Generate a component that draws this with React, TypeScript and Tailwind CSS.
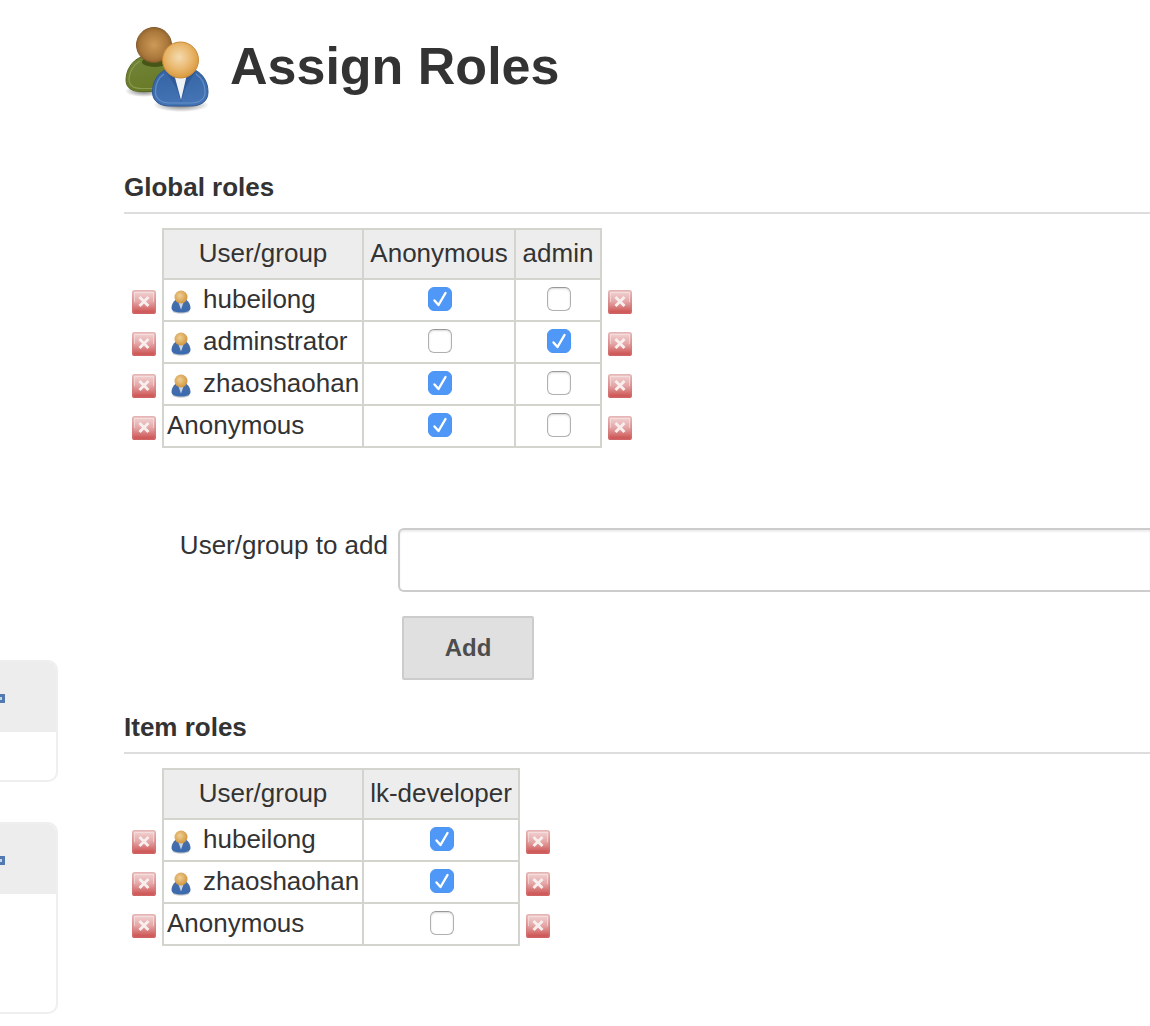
import React, { useState } from "react";

type Member = { name: string; icon: boolean; roles: boolean[] };

function AssignRolesIcon() {
  return (
    <svg className="size-[88px] shrink-0" viewBox="0 0 88 88" aria-hidden="true">
      <defs>
        <radialGradient id="brown" cx="0.5" cy="0.5" r="0.55">
          <stop offset="0" stopColor="#cd9a58" />
          <stop offset="0.7" stopColor="#ab783c" />
          <stop offset="1" stopColor="#8b5e2a" />
        </radialGradient>
        <radialGradient id="tan" cx="0.46" cy="0.42" r="0.6">
          <stop offset="0" stopColor="#f5dbb0" />
          <stop offset="0.6" stopColor="#e8b56a" />
          <stop offset="1" stopColor="#d8973a" />
        </radialGradient>
        <linearGradient id="green" x1="0" y1="0" x2="0.4" y2="1">
          <stop offset="0" stopColor="#71843a" />
          <stop offset="1" stopColor="#697b27" />
        </linearGradient>
        <linearGradient id="blue" x1="0" y1="0" x2="0.2" y2="1">
          <stop offset="0" stopColor="#3563a3" />
          <stop offset="1" stopColor="#4474b5" />
        </linearGradient>
        <radialGradient id="shade">
          <stop offset="0" stopColor="#000" stopOpacity="0.55" />
          <stop offset="1" stopColor="#000" stopOpacity="0" />
        </radialGradient>
      </defs>
      <ellipse cx="20" cy="67" rx="19" ry="6" fill="url(#shade)" />
      <ellipse cx="57" cy="81" rx="28" ry="7" fill="url(#shade)" />
      <path d="M17 33C7 37 2 47 2 56c0 8 6 11.500 15 11.500h28V33z" fill="url(#green)" stroke="#596a22" strokeWidth="1" />
      <path d="M16 37C9 41 5 49 5 55c0 7 5 9.500 13 9.500h14" fill="none" stroke="#8a9b50" strokeWidth="1.200" />
      <ellipse cx="31" cy="38" rx="13" ry="5" fill="#465616" />
      <circle cx="30" cy="21" r="17.500" fill="url(#brown)" stroke="#80582a" strokeWidth="1" />
      <path d="M41 46c-8 4-12.500 12-12.500 22 0 9 7 14 17 14h21c11 0 17.500-5 17.500-14 0-10-5-18-13-22z" fill="url(#blue)" stroke="#2f5892" strokeWidth="1" />
      <path d="M40 50c-6 4-8.500 11-8.500 18 0 7 6 11 14 11h21c9 0 14.500-4 14.500-11 0-8-3-14-9-18" fill="none" stroke="#648fc8" strokeWidth="1.200" />
      <path d="M42 48l11 17 4 13 4-13 10-17z" fill="#2f5997" />
      <path d="M50 50l7 26 6-26z" fill="#eef1f5" />
      <circle cx="56.500" cy="36" r="18" fill="url(#tan)" stroke="#c98b38" strokeWidth="1" />
    </svg>
  );
}

function PersonIcon() {
  return (
    <svg className="h-6 w-5 shrink-0" viewBox="0 0 20 24" aria-hidden="true">
      <defs>
        <radialGradient id="person-head" cx="0.42" cy="0.4" r="0.6">
          <stop offset="0" stopColor="#efcf95" />
          <stop offset="1" stopColor="#d2973f" />
        </radialGradient>
        <linearGradient id="person-body" x1="0" y1="0" x2="0" y2="1">
          <stop offset="0" stopColor="#4a6fa6" />
          <stop offset="1" stopColor="#3a6ab0" />
        </linearGradient>
      </defs>
      <ellipse cx="10" cy="21.500" rx="8.500" ry="2.200" fill="#000" opacity="0.2" />
      <path d="M5 9.500C1.500 12 .5 15.500.5 18c0 3 3.500 4.500 9.500 4.500s9.500-1.500 9.500-4.500c0-2.500-1-6-4.500-8.500z" fill="url(#person-body)" />
      <path d="M7.500 12.500l2.500 7 2.500-7z" fill="#c7d4e5" />
      <circle cx="10" cy="7" r="6.500" fill="url(#person-head)" />
    </svg>
  );
}

function DeleteButton({ label }: { label: string }) {
  return (
    <button type="button" aria-label={label} className="block size-6">
      <svg className="size-6" viewBox="0 0 24 24" aria-hidden="true">
        <defs>
          <linearGradient id="stop" x1="0" y1="0" x2="0" y2="1">
            <stop offset="0" stopColor="#f3d6d6" />
            <stop offset="0.5" stopColor="#e3a4a4" />
            <stop offset="1" stopColor="#cc4d4d" />
          </linearGradient>
          <linearGradient id="stop-edge" x1="0" y1="0" x2="0" y2="1">
            <stop offset="0" stopColor="#e5b4b4" />
            <stop offset="1" stopColor="#d06464" />
          </linearGradient>
        </defs>
        <rect x="0.800" y="0.800" width="22.400" height="22.400" rx="1.800" fill="url(#stop)" stroke="url(#stop-edge)" strokeWidth="1.600" />
        <path d="M2.500 12V2.500h19V12" fill="none" stroke="#fbecec" strokeOpacity="0.500" />
        <path d="M7.500 7l9 9M16.500 7l-9 9" stroke="#f8eeee" strokeWidth="3" />
      </svg>
    </button>
  );
}

function RoleCheckbox({ initial, label }: { initial: boolean; label: string }) {
  const [checked, setChecked] = useState(initial);
  return (
    <span className="relative mx-auto block size-6">
      <input
        type="checkbox"
        aria-label={label}
        checked={checked}
        onChange={(e) => setChecked(e.target.checked)}
        className="block size-6 appearance-none rounded-[6px] border border-[#b0b0b0] border-t-[#999999] bg-white shadow-[inset_0_1px_2px_#d8d8d8] checked:border-[#4b95f3] checked:bg-[#5098f7] checked:shadow-none"
      />
      {checked && (
        <svg className="pointer-events-none absolute inset-0 size-6" viewBox="0 0 24 24" fill="none" aria-hidden="true">
          <path d="M6.500 13.500l4 4.500 7-12" stroke="#fff" strokeWidth="2.400" strokeLinecap="round" strokeLinejoin="round" />
        </svg>
      )}
    </span>
  );
}

const cell = "border-2 border-[#d3d4cd]";

function RoleTable({ roles, widths, members }: { roles: string[]; widths: string[]; members: Member[] }) {
  return (
    <table className="mt-[14px] w-0 table-fixed border-collapse">
      <colgroup>
        <col className="w-[39px]" />
        <col className="w-[200px]" />
        {widths.map((w, i) => (
          <col key={i} className={w} />
        ))}
        <col className="w-[39px]" />
      </colgroup>
      <thead>
        <tr className="h-[50px]">
          <td />
          {["User/group", ...roles].map((heading) => (
            <th key={heading} scope="col" className={`${cell} bg-[#ededed] p-0 pb-[2px] text-center font-normal whitespace-nowrap`}>
              {heading}
            </th>
          ))}
          <td />
        </tr>
      </thead>
      <tbody>
        {members.map((m) => (
          <tr key={m.name} className="h-[42px]">
            <td className="p-0 pt-1 pl-2">
              <DeleteButton label={`Remove ${m.name}`} />
            </td>
            <td className={`${cell} p-0 pl-[3px]`}>
              <div className="flex items-center whitespace-nowrap">
                {m.icon && (
                  <span className="mr-3 ml-1 pt-[3px]">
                    <PersonIcon />
                  </span>
                )}
                <span className="pb-[2px] leading-[30px]">{m.name}</span>
              </div>
            </td>
            {m.roles.map((on, i) => (
              <td key={roles[i]} className={`${cell} p-0 pb-[2px] pl-px`}>
                <RoleCheckbox initial={on} label={`${roles[i]} for ${m.name}`} />
              </td>
            ))}
            <td className="p-0 pt-1 pl-[6px]">
              <DeleteButton label={`Remove ${m.name}`} />
            </td>
          </tr>
        ))}
      </tbody>
    </table>
  );
}

function SectionTitle({ children }: { children: React.ReactNode }) {
  return <h2 className="border-b-2 border-[#dddddd] pb-[10px] leading-[30px] font-bold">{children}</h2>;
}

function SidePanel({ body }: { body: string }) {
  return (
    <section className="rounded-r-[10px] border-2 border-l-0 border-[#efefef]">
      <div className="flex h-[70px] items-center rounded-tr-lg bg-[#ededed]">
        <button type="button" aria-label="Collapse" className="mt-[2px] h-[9px] w-[5px] rounded-r-[1px] border-[3px] border-l-0 border-[#5279b0] bg-[#c3d6eb]" />
      </div>
      <div className={body} />
    </section>
  );
}

export default function App() {
  return (
    <div className="flex min-h-screen overflow-hidden bg-white font-['Liberation_Sans',Arial,sans-serif] text-[26px] text-[#333333]">
      <aside className="flex w-[58px] shrink-0 flex-col gap-10 pt-[660px]">
        <SidePanel body="h-12" />
        <SidePanel body="h-[118px]" />
      </aside>
      <main className="min-w-0 flex-1 pt-6 pl-[66px]">
        <header className="mb-[60px] flex items-center gap-[18px]">
          <AssignRolesIcon />
          <h1 className="pb-1 text-[52px] leading-[60px] font-bold whitespace-nowrap">Assign Roles</h1>
        </header>

        <SectionTitle>Global roles</SectionTitle>
        <RoleTable
          roles={["Anonymous", "admin"]}
          widths={["w-[152px]", "w-[86px]"]}
          members={[
            { name: "hubeilong", icon: true, roles: [true, false] },
            { name: "adminstrator", icon: true, roles: [false, true] },
            { name: "zhaoshaohan", icon: true, roles: [true, false] },
            { name: "Anonymous", icon: false, roles: [true, false] },
          ]}
        />

        <form className="mt-20 mb-8" onSubmit={(e) => e.preventDefault()}>
          <div className="flex items-start">
            <label htmlFor="member" className="w-[274px] shrink-0 pt-[2px] pr-[10px] text-right leading-[30px] whitespace-nowrap">
              User/group to add
            </label>
            <input
              id="member"
              type="text"
              className="h-16 min-w-0 flex-1 rounded-l-[6px] border-2 border-r-0 border-[#cccccc] bg-white px-3 shadow-[inset_0_2px_2px_#eeeeee]"
            />
          </div>
          <button type="submit" className="mt-6 ml-[278px] block h-16 w-[132px] rounded-[2px] border-2 border-[#cccccc] bg-[#e0e0e0] text-[24px] font-bold text-[#4d4d4d]">
            Add
          </button>
        </form>

        <SectionTitle>Item roles</SectionTitle>
        <RoleTable
          roles={["lk-developer"]}
          widths={["w-[156px]"]}
          members={[
            { name: "hubeilong", icon: true, roles: [true] },
            { name: "zhaoshaohan", icon: true, roles: [true] },
            { name: "Anonymous", icon: false, roles: [false] },
          ]}
        />
      </main>
    </div>
  );
}
